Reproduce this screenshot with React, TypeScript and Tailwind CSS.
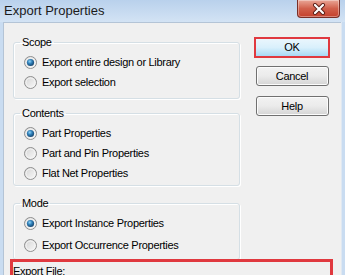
import React from "react";

const font = { fontFamily: '"Liberation Sans", Arial, sans-serif' };

const Radio = ({ checked }: { checked?: boolean }) => (
  <svg width="13" height="13" viewBox="0 0 13 13" className="shrink-0">
    <defs>
      <linearGradient id="rbg" x1="0" y1="0" x2="1" y2="1">
        <stop offset="0" stopColor="#d2d2d2" />
        <stop offset="1" stopColor="#fbfbfb" />
      </linearGradient>
      <radialGradient id="rdot" cx="0.4" cy="0.35" r="0.7">
        <stop offset="0" stopColor="#8fd3f7" />
        <stop offset="0.45" stopColor="#2f7fb8" />
        <stop offset="1" stopColor="#143f66" />
      </radialGradient>
    </defs>
    <circle cx="6.5" cy="6.5" r="6" fill="url(#rbg)" stroke="#8f8f8f" />
    <circle cx="6.5" cy="6.5" r="4.5" fill="none" stroke="#f4f4f4" />
    {checked && <circle cx="6.5" cy="6.5" r="3.6" fill="url(#rdot)" />}
  </svg>
);

const Option = ({ label, checked, h = "h-[20px]" }: { label: string; checked?: boolean; h?: string }) => (
  <div className={`flex items-center gap-[5px] pl-[10px] ${h}`}>
    <Radio checked={checked} />
    <span className="text-[11px] tracking-[-0.3px] text-black leading-none">{label}</span>
  </div>
);

const Group = ({ title, children, className }: { title: string; children: React.ReactNode; className?: string }) => (
  <fieldset
    className={`border border-[#d5dfe5] rounded-[3px] shadow-[inset_1px_1px_0_#fff,1px_1px_0_#fff] ${className ?? ""}`}
  >
    <legend className="ml-[6px] px-[2px] text-[11px] tracking-[-0.3px] leading-[14px] text-black">{title}</legend>
    {children}
  </fieldset>
);

const Btn = ({ label, className }: { label: string; className?: string }) => (
  <div
    className={`flex items-center justify-center w-[73px] h-[20px] rounded-[3px] border border-[#707070] bg-gradient-to-b from-[#f2f2f2] via-[#ebebeb] to-[#d4d4d4] text-[11px] tracking-[-0.3px] text-black shadow-[inset_0_0_0_1px_#fcfcfc] ${className ?? ""}`}
  >
    {label}
  </div>
);

export default function App() {
  return (
    <div className="w-[345px] h-[275px] overflow-hidden flex flex-col bg-[#c9dcf1]" style={font}>
      {/* title bar */}
      <div className="h-[22px] shrink-0 flex items-start justify-between bg-gradient-to-b from-[#b9d1ec] to-[#d3e3f4]">
        <span className="pl-[4px] pt-[3px] text-[13px] leading-[15px] text-[#1b1b1b]">Export Properties</span>
        <div className="mr-[5px] w-[43px] h-[18px] rounded-b-[4px] border border-t-0 border-[#7a2f27] bg-gradient-to-b from-[#e9a697] via-[#d1604c] to-[#c4402c] flex items-center justify-center shadow-[inset_0_0_0_1px_rgba(255,255,255,0.35)]">
          <svg width="14" height="12" viewBox="0 0 14 12">
            <path d="M3 2 L11 10 M11 2 L3 10" stroke="#5a1d16" strokeWidth="4" strokeLinecap="round" />
            <path d="M3 2 L11 10 M11 2 L3 10" stroke="#ffffff" strokeWidth="2.2" strokeLinecap="round" />
          </svg>
        </div>
      </div>

      {/* body */}
      <div className="flex flex-1 min-h-0">
        <div className="w-[3px] shrink-0" />
        <div className="flex-1 bg-[#f0f0f0] border-t border-l border-[#b4c4d6] flex flex-col pl-[6px] pr-[7px]">
          <div className="flex">
            <div className="ml-[3px] w-[227px] flex flex-col">
              <Group title="Scope" className="mt-[12px] pt-[3px] pb-[6px]">
                <Option label="Export entire design or Library" checked />
                <Option label="Export selection" />
              </Group>
              <Group title="Contents" className="mt-[7px] pt-[3px] pb-[2px]">
                <Option label="Part Properties" checked />
                <Option label="Part and Pin Properties" />
                <Option label="Flat Net Properties" />
              </Group>
              <Group title="Mode" className="mt-[10px] pt-[2px] pb-[3px]">
                <Option label="Export Instance Properties" checked h="h-[22px]" />
                <Option label="Export Occurrence Properties" h="h-[22px]" />
              </Group>
            </div>
            <div className="ml-[14px] flex flex-col items-center">
              <div className="mt-[14px] w-[76px] h-[21px] border-[2px] border-[#e0393f] flex items-center justify-center bg-gradient-to-b from-[#eaf6fd] via-[#d9f0fc] to-[#a7d9f5] text-[11px] tracking-[-0.3px] text-black">
                OK
              </div>
              <Btn label="Cancel" className="mt-[8px]" />
              <Btn label="Help" className="mt-[10px]" />
            </div>
          </div>
          <div className="mt-[-1px] w-[323px] h-[30px] border-[3px] border-b-0 border-[#e0393f] text-[11px] tracking-[-0.3px] leading-[14px] text-black pt-[2px]">
            Export File:
          </div>
        </div>
        <div className="w-[4px] shrink-0 border-l border-[#dfe8f2]" />
      </div>
    </div>
  );
}
